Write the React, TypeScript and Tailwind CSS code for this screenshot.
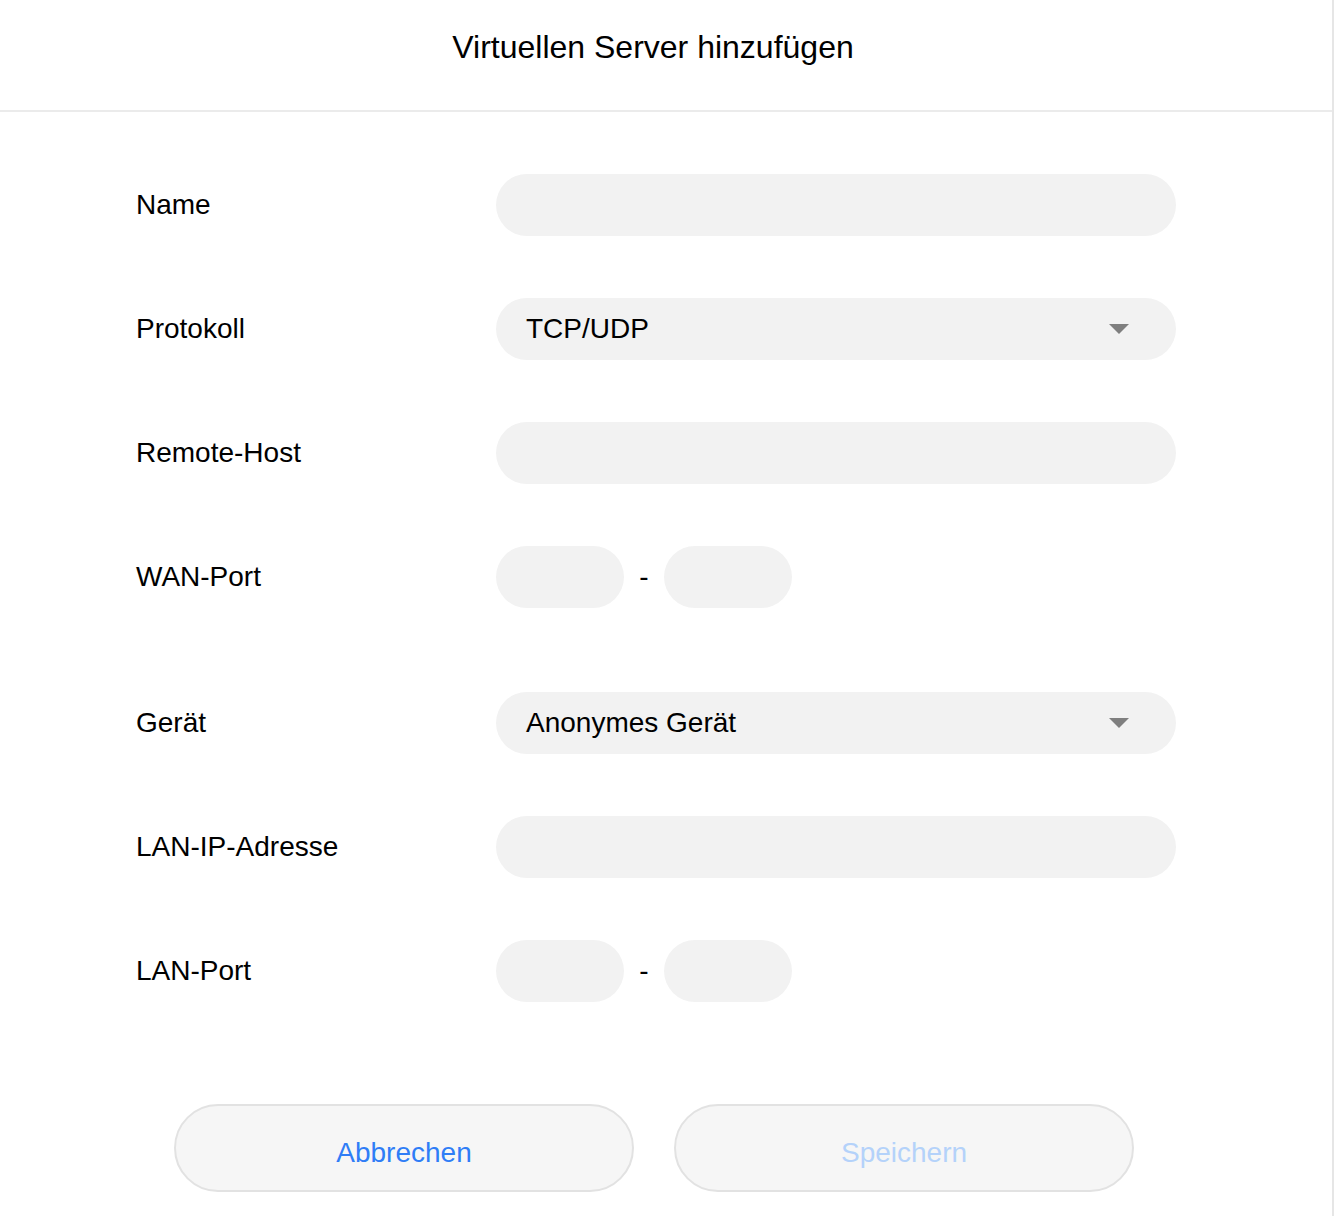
import React from "react";

function Caret() {
  return (
    <svg width="20" height="10" viewBox="0 0 20 10" className="absolute right-[47px] top-[26px]">
      <polygon points="0,0 20,0 10,10" fill="#7f7f7f" />
    </svg>
  );
}

function Row({ label, children, extra }: { label: string; children: React.ReactNode; extra?: string }) {
  return (
    <div className={"flex items-center h-[62px] " + (extra ?? "")}>
      <div className="w-[360px] text-[28px] text-black">{label}</div>
      {children}
    </div>
  );
}

function Input({ text, select }: { text?: string; select?: boolean }) {
  return (
    <div className="relative flex items-center h-[62px] w-[680px] rounded-full bg-[#f2f2f2] pl-[30px] text-[28px] text-black">
      {text}
      {select && <Caret />}
    </div>
  );
}

function PortPair() {
  return (
    <div className="flex items-center">
      <div className="h-[62px] w-[128px] rounded-full bg-[#f2f2f2]" />
      <div className="w-[40px] text-center text-[28px] text-black">-</div>
      <div className="h-[62px] w-[128px] rounded-full bg-[#f2f2f2]" />
    </div>
  );
}

export default function App() {
  return (
    <div
      className="w-[1334px] h-[1216px] bg-white border-r-2 border-[#e6e6e6]"
      style={{ fontFamily: '"Liberation Sans", Arial, Helvetica, sans-serif' }}
    >
      <div className="h-[112px] border-b-2 border-[#ebebeb]">
        <div className="w-[1306px] pt-[29px] text-center text-[32px] leading-[36px] text-black">
          Virtuellen Server hinzufügen
        </div>
      </div>
      <div className="pl-[136px] pt-[62px] flex flex-col gap-[62px]">
        <Row label="Name">
          <Input />
        </Row>
        <Row label="Protokoll">
          <Input text="TCP/UDP" select />
        </Row>
        <Row label="Remote-Host">
          <Input />
        </Row>
        <Row label="WAN-Port" extra="mb-[22px]">
          <PortPair />
        </Row>
        <Row label="Gerät">
          <Input text="Anonymes Gerät" select />
        </Row>
        <Row label="LAN-IP-Adresse">
          <Input />
        </Row>
        <Row label="LAN-Port">
          <PortPair />
        </Row>
      </div>
      <div className="flex gap-[40px] pl-[174px] pt-[102px]">
        <button className="h-[88px] w-[460px] rounded-full border-2 border-[#e2e2e2] bg-[#f6f6f6] pt-[10px] text-[28px] text-[#2f7df6]">
          Abbrechen
        </button>
        <button className="h-[88px] w-[460px] rounded-full border-2 border-[#e2e2e2] bg-[#f6f6f6] pt-[10px] text-[28px] text-[#b4d2fa]">
          Speichern
        </button>
      </div>
    </div>
  );
}
